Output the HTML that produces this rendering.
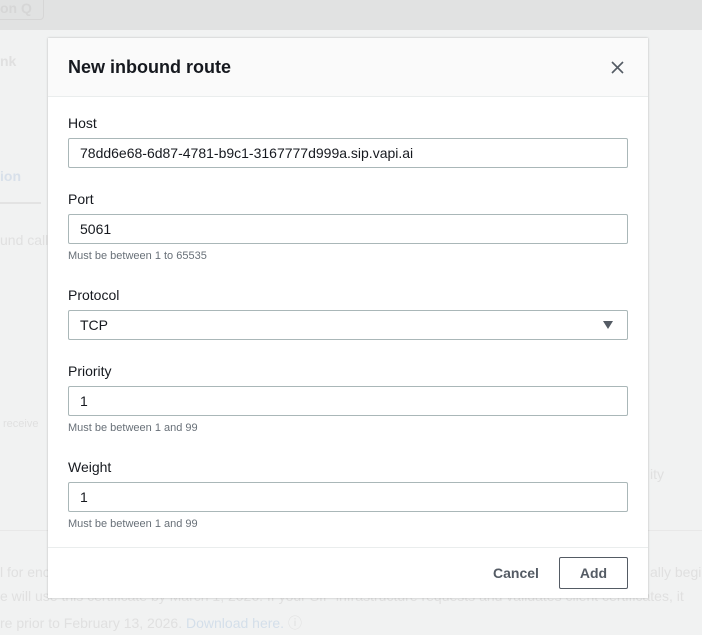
<!DOCTYPE html>
<html><head><style>
body{margin:0;width:702px;height:635px;background:#f1f2f2;font-family:"Liberation Sans",sans-serif;position:relative;overflow:hidden}
.top{position:absolute;left:0;top:0;width:702px;height:30px;background:#e1e2e2}
.bg{position:absolute;color:#e0e0e0;font-size:14px;white-space:nowrap}
.modal{position:absolute;left:48px;top:38px;width:600px;height:560px;background:#fff;box-shadow:0 0 2px rgba(0,0,0,.25)}
.hdr{height:58px;background:#fafafa;border-bottom:1px solid #eaeded;position:relative}
.hdr h1{margin:0;position:absolute;left:20px;top:19px;font-size:18px;font-weight:bold;color:#16191f}
.lbl{position:absolute;left:20px;font-size:14px;color:#16191f}
.in{position:absolute;left:20px;height:28px;border:1px solid #aab7b8;border-radius:2px;font-size:14px;color:#16191f;line-height:28px;padding-left:11px;box-sizing:content-box;width:547px}
.help{position:absolute;left:20px;font-size:11px;color:#687078}
.ftr{position:absolute;left:0;top:509px;width:600px;border-top:1px solid #eaeded}
</style></head><body>
<div class="top"><div style="position:absolute;left:-10px;top:-8px;width:52px;height:26px;border:1px solid #d6d6d6;border-radius:4px"></div><span style="position:absolute;left:0;top:0;color:#d6d6d6;font-weight:bold;font-size:14px">on Q</span></div>
<div class="bg" style="left:0;top:53px;font-weight:bold">nk</div>
<div class="bg" style="left:0;top:168px;font-weight:bold;color:#d8e0ea">ion</div>
<div style="position:absolute;left:0;top:202px;width:41px;border-top:2px solid #e3e3e3"></div>
<div class="bg" style="left:0;top:232px">und call</div>
<div class="bg" style="left:3px;top:418px;font-size:11px">receive</div>
<div class="bg" style="left:650px;top:466px">ity</div>
<div style="position:absolute;left:0;top:530px;width:702px;border-top:1px solid #e8e8e8"></div>
<div class="bg" style="left:0;top:564px">l for enc</div>
<div class="bg" style="left:650px;top:564px">ally begin</div>
<div class="bg" style="left:0;top:588px">e will use this certificate by March 1, 2026. If your SIP infrastructure requests and validates client certificates, it</div>
<div class="bg" style="left:0;top:613px">re prior to February 13, 2026. <span style="color:#d4dfea">Download here.</span> ⓘ</div>
<div class="modal">
<div class="hdr"><h1>New inbound route</h1>
<svg style="position:absolute;left:563px;top:23px" width="13" height="13"><path d="M1 1L12 12M12 1L1 12" stroke="#545b64" stroke-width="1.6"/></svg></div>
<div class="lbl" style="top:77px">Host</div>
<div class="in" style="top:100px">78dd6e68-6d87-4781-b9c1-3167777d999a.sip.vapi.ai</div>
<div class="lbl" style="top:153px">Port</div>
<div class="in" style="top:176px">5061</div>
<div class="help" style="top:212px">Must be between 1 to 65535</div>
<div class="lbl" style="top:249px">Protocol</div>
<div class="in" style="top:272px">TCP<svg style="position:absolute;right:14px;top:10px" width="10" height="8"><path d="M0 0H10L5 8Z" fill="#545b64"/></svg></div>
<div class="lbl" style="top:325px">Priority</div>
<div class="in" style="top:348px">1</div>
<div class="help" style="top:384px">Must be between 1 and 99</div>
<div class="lbl" style="top:421px">Weight</div>
<div class="in" style="top:444px">1</div>
<div class="help" style="top:480px">Must be between 1 and 99</div>
<div class="ftr"></div>
<div style="position:absolute;left:445px;top:527px;font-size:14px;font-weight:bold;color:#545b64">Cancel</div>
<div style="position:absolute;left:511px;top:519px;width:67px;height:30px;border:1px solid #545b64;border-radius:2px;text-align:center;line-height:30px;font-size:14px;font-weight:bold;color:#545b64">Add</div>
</div>
</body></html>
